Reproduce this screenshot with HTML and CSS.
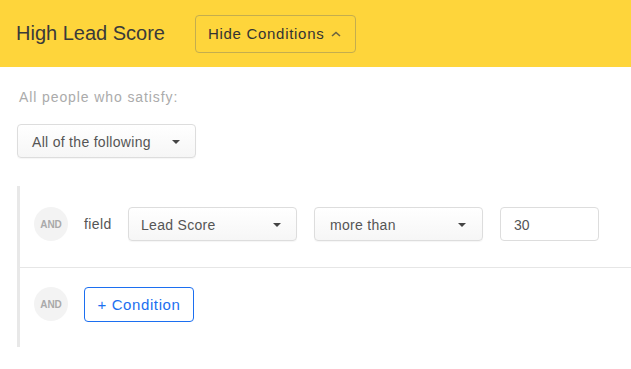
FILE: index.html
```html
<!DOCTYPE html>
<html lang="en">
<head>
  <meta charset="UTF-8">
  <meta name="viewport" content="width=device-width, initial-scale=1">
  <title>High Lead Score</title>
  <link rel="stylesheet" href="styles.css">
</head>
<body>
  <header class="header">
    <h1 class="title">High Lead Score</h1>
    <button class="toggle">Hide Conditions
      <svg class="chevron" width="10" height="6" viewBox="0 0 10 6"><path d="M1 5 L5 1.5 L9 5" fill="none" stroke="#6b6340" stroke-width="1.6"/></svg>
    </button>
  </header>

  <main class="content">
    <p class="intro">All people who satisfy:</p>
    <div class="select select-match">All of the following <span class="caret"></span></div>

    <div class="conditions">
      <div class="row">
        <span class="and">AND</span>
        <span class="label">field</span>
        <div class="select select-field">Lead Score <span class="caret"></span></div>
        <div class="select select-field select-op">more than <span class="caret"></span></div>
        <div class="value">30</div>
      </div>
      <div class="row row-last">
        <span class="and">AND</span>
        <button class="add">+ Condition</button>
      </div>
    </div>
  </main>
</body>
</html>
```

FILE: styles.css
```css
body {
  margin: 0;
  font-family: "Liberation Sans", Arial, sans-serif;
  color: #333;
  background: #fff;
}
.header {
  height: 67px;
  background: #fed53b;
  display: flex;
  align-items: center;
  padding-left: 16px;
}
.title {
  margin: 0;
  font-size: 20px;
  font-weight: 400;
  color: #3a3a3a;
}
.toggle {
  margin-left: 30px;
  height: 38px;
  width: 161px;
  padding: 0 0 0 12px;
  display: flex;
  align-items: center;
  background: transparent;
  border: 1px solid #c4ad4e;
  border-radius: 4px;
  font-family: inherit;
  font-size: 15px;
  letter-spacing: 0.7px;
  color: #333;
  text-align: left;
}
.chevron {
  margin-left: 7px;
}
.content {
  padding: 0 0 0 17px;
}
.intro {
  margin: 0;
  padding: 21px 0 0 2px;
  height: 36px;
  line-height: 18px;
  font-size: 14px;
  letter-spacing: 0.9px;
  color: #ababab;
}
.select {
  box-sizing: border-box;
  height: 34px;
  display: flex;
  align-items: center;
  padding: 1px 0 0 14px;
  border: 1px solid #ddd;
  border-radius: 4px;
  background: linear-gradient(#fff, #f6f6f6);
  box-shadow: 0 1px 1px rgba(0, 0, 0, 0.04);
  font-size: 14px;
  letter-spacing: 0.3px;
  color: #555;
  position: relative;
}
.caret {
  position: absolute;
  right: 15px;
  top: 15px;
  border-left: 4px solid transparent;
  border-right: 4px solid transparent;
  border-top: 4px solid #444;
}
.select-match {
  width: 179px;
}
.conditions {
  margin-top: 28px;
  border-left: 3px solid #e8e8e8;
}
.row {
  box-sizing: border-box;
  height: 82px;
  display: flex;
  align-items: flex-start;
  padding: 21px 0 0 14px;
  border-bottom: 1px solid #e6e6e6;
}
.row-last {
  height: 79px;
  padding-top: 19px;
  border-bottom: none;
}
.and {
  width: 34px;
  height: 34px;
  border-radius: 50%;
  background: #f3f3f3;
  color: #aaa;
  font-size: 10px;
  font-weight: 700;
  display: flex;
  align-items: center;
  justify-content: center;
  margin-right: 16px;
}
.label {
  font-size: 14px;
  letter-spacing: 0.4px;
  line-height: 35px;
  color: #555;
  width: 44px;
}
.select-field {
  width: 169px;
  margin-right: 17px;
  padding-left: 12px;
}
.select-op {
  padding-left: 15px;
}
.select-op .caret {
  right: 16px;
}
.value {
  box-sizing: border-box;
  width: 99px;
  height: 34px;
  display: flex;
  align-items: center;
  padding: 1px 0 0 13px;
  border: 1px solid #ddd;
  border-radius: 4px;
  font-size: 14px;
  color: #555;
}
.add {
  box-sizing: border-box;
  width: 110px;
  height: 35px;
  background: #fff;
  border: 1px solid #1c6ff0;
  border-radius: 4px;
  color: #1c6ff0;
  font-family: inherit;
  font-size: 15px;
  letter-spacing: 0.6px;
  padding: 0;
}
```
